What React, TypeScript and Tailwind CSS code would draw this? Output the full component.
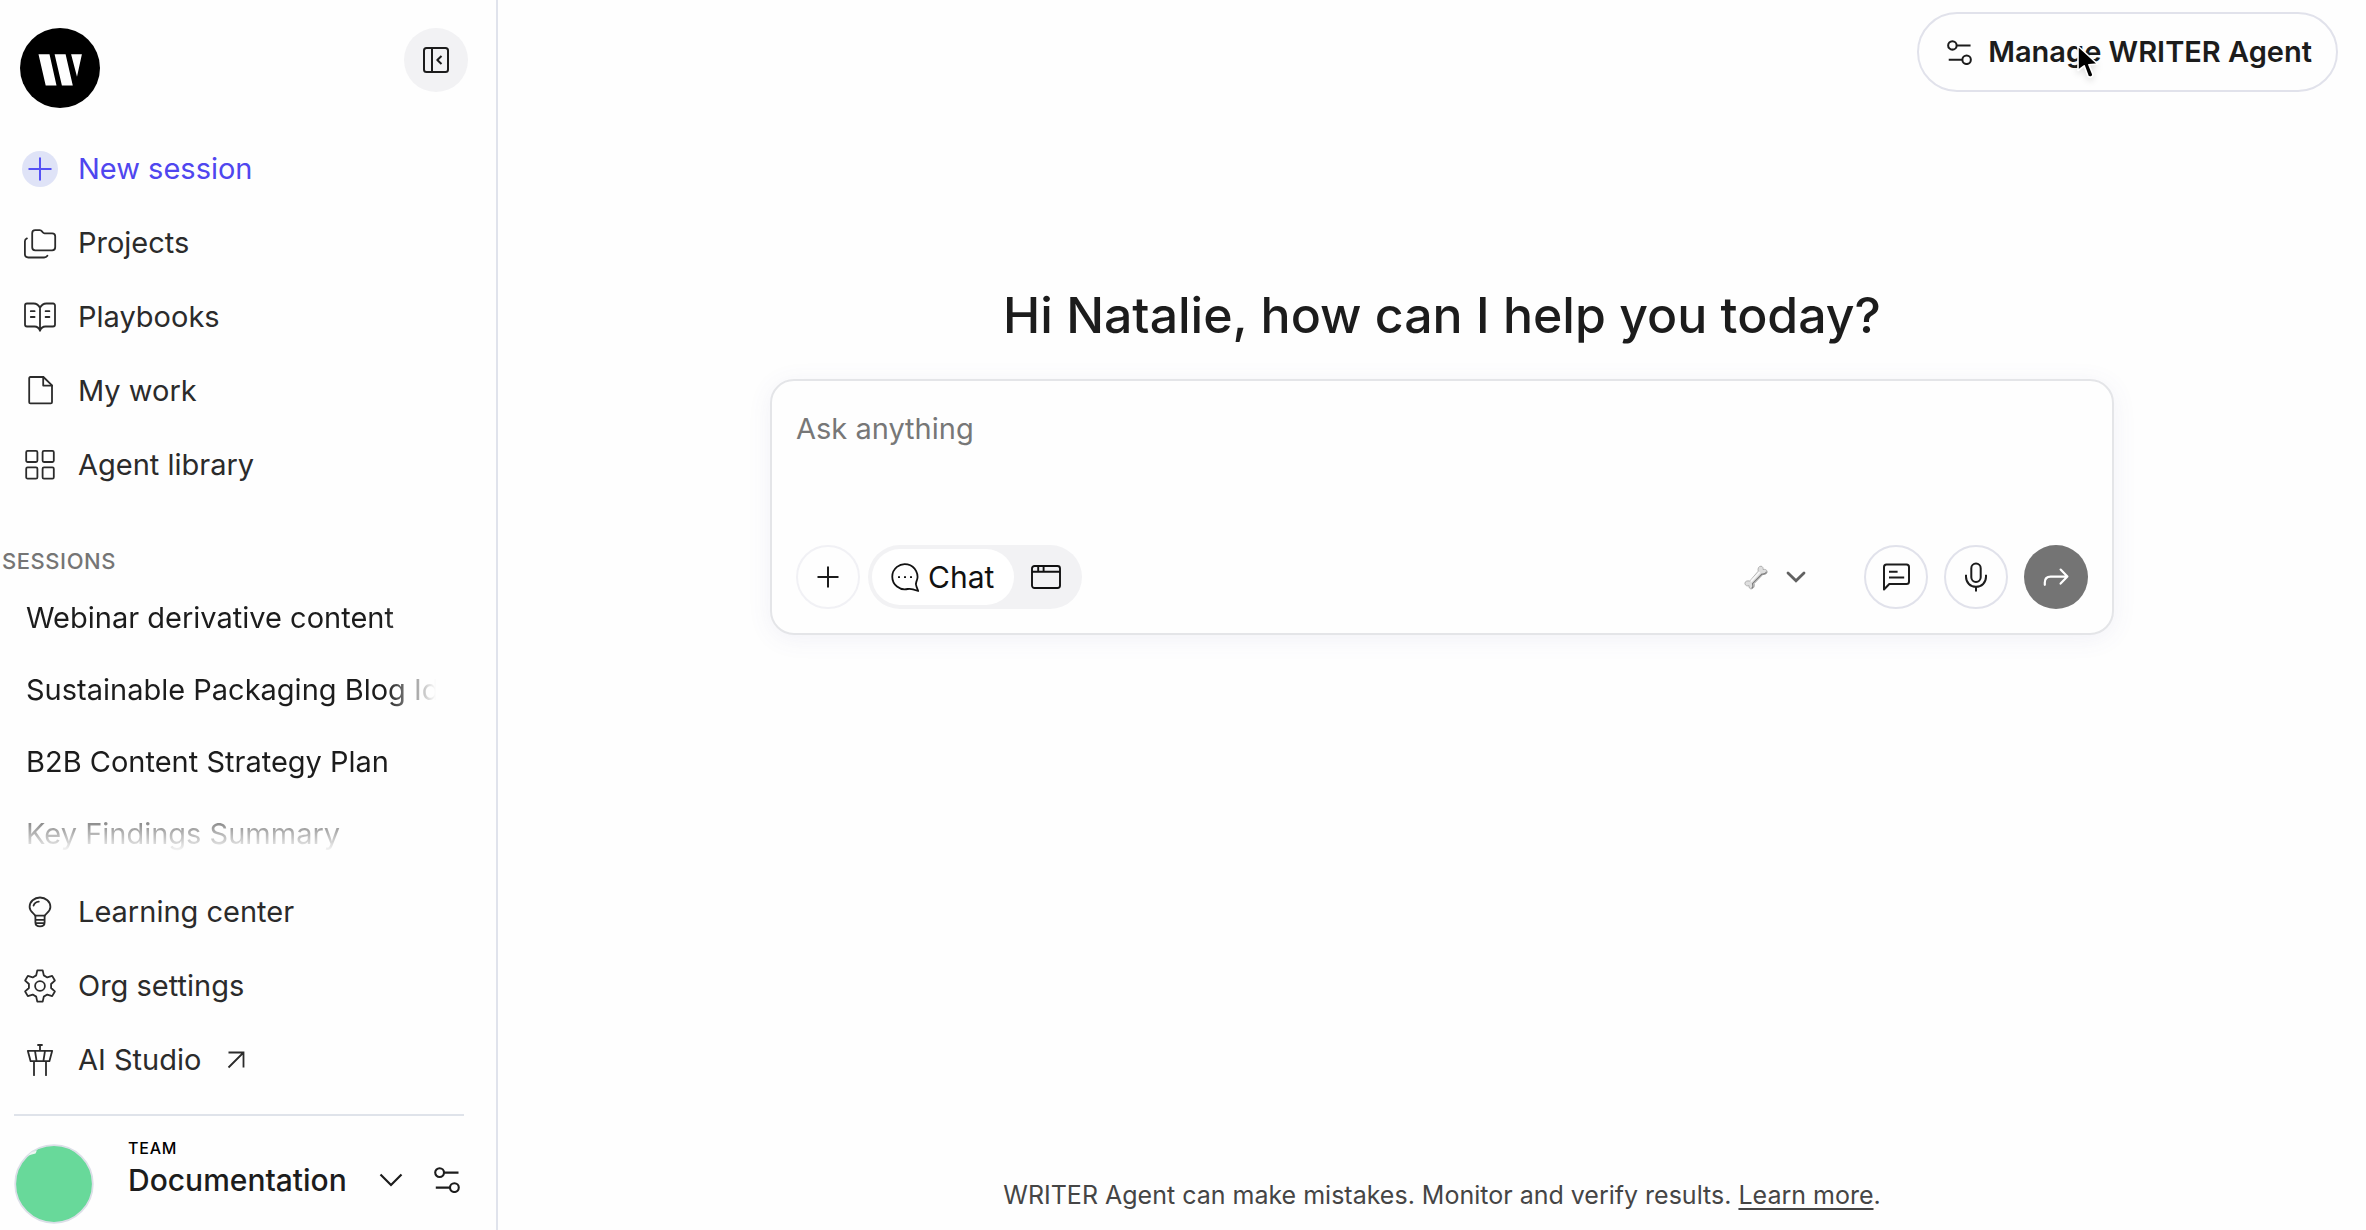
import { useState } from "react";
import type { ReactNode } from "react";

interface NavEntry {
  label: string;
  icon: ReactNode;
  external?: boolean;
}

const sessions = [
  "Webinar derivative content",
  "Sustainable Packaging Blog Ideas",
  "B2B Content Strategy Plan",
  "Key Findings Summary",
];

// one tooth of the gear, repeated six times around the centre
const gearPoints = [0, 60, 120, 180, 240, 300]
  .flatMap((deg) => {
    const a = (deg * Math.PI) / 180;
    return [[-3.8, -10.6], [-2.7, -15.6], [2.7, -15.6], [3.8, -10.6]].map(
      ([x, y]) => `${(18 + x * Math.cos(a) - y * Math.sin(a)).toFixed(2)},${(18 + x * Math.sin(a) + y * Math.cos(a)).toFixed(2)}`
    );
  })
  .join(" ");

function Glyph({ children }: { children: ReactNode }) {
  return (
    <svg viewBox="0 0 36 36" className="size-9 shrink-0" fill="none" stroke="currentColor" strokeWidth="1.8" strokeLinecap="round" strokeLinejoin="round" aria-hidden="true">
      {children}
    </svg>
  );
}

function SlidersIcon({ className }: { className: string }) {
  return (
    <svg viewBox="0 0 26 26" className={className} fill="none" stroke="currentColor" strokeWidth="2.1" aria-hidden="true">
      <circle cx="5.6" cy="5.6" r="4.4" />
      <path d="M10 5.6h14.5M1.8 20.6h14.6" />
      <circle cx="20.4" cy="20.6" r="4.4" />
    </svg>
  );
}

const mainNav: NavEntry[] = [
  {
    label: "Projects",
    icon: (
      <Glyph>
        <path d="M13.2 5.2h4.6c1 0 1.6.4 2.2 1.2l.9 1.1c.4.5.9.8 1.6.8h7.6c2 0 3.1 1.1 3.1 3v11c0 2-1.1 3-3.1 3H13.2c-2 0-3-1-3-3v-14c0-2 1-3.1 3-3.1z" />
        <path d="M4.9 13.4c-1.4.5-2 1.4-2 2.9v12.8c0 2.2 1.3 3.4 3.5 3.4h15.7c1.4 0 2.5-.5 3.3-1.7" />
      </Glyph>
    ),
  },
  {
    label: "Playbooks",
    icon: (
      <Glyph>
        <path d="M18 8.8C16.6 5.9 14.6 4.5 11.6 4.5H5c-1.2 0-2 .8-2 2v19c0 1.2.8 2 2 2h7.5c2.5 0 4.5 1.3 5.5 4.3 1-3 3-4.3 5.5-4.3H31c1.2 0 2-.8 2-2v-19c0-1.2-.8-2-2-2h-6.6c-3 0-5 1.4-6.4 4.3zM18 8.8v23" />
        <path d="M8.8 12.2h3.8M8.8 18h3.8M23.6 12.2h3.8M23.6 18h3.8" />
      </Glyph>
    ),
  },
  {
    label: "My work",
    icon: (
      <Glyph>
        <path d="M8.4 4h13l8.6 8.4v16.8c0 .8-.4 1.2-1.2 1.2H8.4c-.8 0-1.2-.4-1.2-1.2v-24c0-.8.4-1.2 1.2-1.2z" />
        <path d="M21.2 4v8.6H30" />
      </Glyph>
    ),
  },
  {
    label: "Agent library",
    icon: (
      <Glyph>
        <rect x="4.2" y="3.8" width="11.2" height="11.2" rx="1.4" />
        <rect x="20.6" y="3.8" width="11.2" height="11.2" rx="1.4" />
        <rect x="4.2" y="20.4" width="11.2" height="11.2" rx="1.4" />
        <rect x="20.6" y="20.4" width="11.2" height="11.2" rx="1.4" />
      </Glyph>
    ),
  },
];

const footerNav: NavEntry[] = [
  {
    label: "Learning center",
    icon: (
      <Glyph>
        <path d="M13.2 21.6c-1-2.2-5.6-3.9-5.6-8.7a10.4 9.4 0 0 1 20.8 0c0 4.8-4.6 6.5-5.6 8.7z" />
        <path d="M11.6 11.6c.6-2.1 2.4-3.7 5.2-4" />
        <path d="M13.4 21.6v7c0 2.2 1.8 3.8 4.6 3.8s4.6-1.6 4.6-3.8v-7M13.4 25.8h9.2M13.6 29.2h8.8" />
      </Glyph>
    ),
  },
  {
    label: "Org settings",
    icon: (
      <Glyph>
        <polygon points={gearPoints} />
        <circle cx="18" cy="18" r="4.9" />
      </Glyph>
    ),
  },
  {
    label: "AI Studio",
    external: true,
    icon: (
      <Glyph>
        <path d="M16 3h4M18 3v5.6M5.8 8.8h24.4l-2.8 10.4H8.6zM13 8.8l1.6 10.4M23 8.8l-1.6 10.4M12 19.2v14M24 19.2v14" />
      </Glyph>
    ),
  },
];

function NavItem({ entry }: { entry: NavEntry }) {
  return (
    <li>
      <a href="#" className="flex h-[74px] items-center gap-5 pl-[22px] text-[#2b2b2b]">
        {entry.icon}
        <span>{entry.label}</span>
        {entry.external && (
          <svg viewBox="0 0 18 18" className="ml-1.5 size-[18px]" fill="none" stroke="currentColor" strokeWidth="1.8" aria-hidden="true">
            <path d="M1.5 1.5h15v15M16.5 1.5l-15 15" />
          </svg>
        )}
      </a>
    </li>
  );
}

function Sidebar() {
  return (
    <aside className="flex h-screen w-[498px] shrink-0 flex-col border-r-2 border-[#e0e3ec] text-[29px] leading-9">
      <div className="flex items-start justify-between pt-7 pr-7 pl-5">
        <a href="#" aria-label="Home">
          <svg viewBox="0 0 80 80" className="size-20" aria-hidden="true">
            <circle cx="40" cy="40" r="40" fill="#000" />
            <path fill="#fff" d="M18.5 26.2h11L36.5 57.4H25.7zM34.6 26.2h11L52.8 57.4H41.9zM51.1 26.2h10.8L57 48.8z" />
          </svg>
        </a>
        <button type="button" aria-label="Collapse sidebar" className="flex size-16 items-center justify-center rounded-full bg-[#f2f2f4] text-[#1c1c1c]">
          <svg viewBox="0 0 26 26" className="size-[26px]" fill="none" stroke="currentColor" strokeWidth="2" strokeLinejoin="round">
            <rect x="1" y="1" width="24" height="24" rx="2.5" />
            <path d="M9 1v24M18.5 9l-4.2 4 4.2 4" />
          </svg>
        </button>
      </div>

      <ul className="pt-6">
        <li>
          <button type="button" className="flex h-[74px] items-center gap-5 pl-[22px] text-[#4f46ef]">
            <svg viewBox="0 0 36 36" className="size-9" stroke="#5551f5" strokeWidth="2" aria-hidden="true">
              <circle cx="18" cy="18" r="18" fill="#dfe3f7" stroke="none" />
              <path d="M18 6.5v23M6.5 18h23" />
            </svg>
            <span>New session</span>
          </button>
        </li>
        {mainNav.map((entry) => (
          <NavItem key={entry.label} entry={entry} />
        ))}
      </ul>

      <h2 className="mt-[45px] mb-[7px] pl-0.5 text-[22px] leading-7 font-medium tracking-wide text-[#757575]">SESSIONS</h2>
      <ul className="mb-[22px] min-h-0 flex-1 overflow-hidden [mask-image:linear-gradient(to_bottom,black_calc(100%-60px),transparent)]">
        {sessions.map((name) => (
          <li key={name}>
            <a href="#" className="mr-[60px] ml-[26px] flex h-[72px] items-center overflow-hidden whitespace-nowrap text-[#1c1c1c] [mask-image:linear-gradient(to_right,black_calc(100%-50px),transparent)]">
              {name}
            </a>
          </li>
        ))}
      </ul>

      <ul>
        {footerNav.map((entry) => (
          <NavItem key={entry.label} entry={entry} />
        ))}
      </ul>

      <div className="mt-[17px] mr-8 ml-[14px] border-t-2 border-[#dfe3ea]" />

      <div className="flex items-start pt-[22px] pr-9 pb-1.5 pl-[14px]">
        <svg viewBox="0 0 80 80" className="mt-1.5 size-20 shrink-0" aria-hidden="true">
          <circle cx="40" cy="40" r="38.8" fill="#68d99a" stroke="#dcdfe8" strokeWidth="1.8" />
          <path d="M14 11.5l3.5-3.3 5.5-2-1.5 3.2z" fill="#eef6f2" />
        </svg>
        <div className="ml-[34px] flex-1">
          <p className="text-base leading-5 font-medium tracking-wider text-black">TEAM</p>
          <div className="flex items-center justify-between text-[#1c1c1c]">
            <button type="button" className="flex items-center gap-8 text-[30px] leading-11 font-medium">
              Documentation
              <svg viewBox="0 0 24 14" className="h-3.5 w-6" fill="none" stroke="currentColor" strokeWidth="2.2">
                <path d="M1.5 1.5L12 12 22.5 1.5" />
              </svg>
            </button>
            <button type="button" aria-label="Team settings">
              <SlidersIcon className="size-[26px]" />
            </button>
          </div>
        </div>
      </div>
    </aside>
  );
}

function Composer() {
  const [prompt, setPrompt] = useState("");
  const round = "flex size-16 items-center justify-center rounded-full border-2";

  return (
    <form className="flex w-full max-w-[1344px] flex-col rounded-3xl border-2 border-[#e4e5e8] bg-[#fefefe] p-6 shadow-[0_4px_24px_rgba(90,90,160,0.08)]">
      <textarea
        aria-label="Message"
        placeholder="Ask anything"
        value={prompt}
        onChange={(e) => setPrompt(e.target.value)}
        className="h-[140px] w-full resize-none bg-transparent pt-1.5 text-[29px] leading-9 outline-none placeholder:text-[#777777]"
      />
      <div className="flex items-center">
        <button type="button" aria-label="Add attachment" className={`${round} border-[#f1f1f5] text-[#1c1c1c]`}>
          <svg viewBox="0 0 22 22" className="size-[22px]" stroke="currentColor" strokeWidth="2">
            <path d="M11 0.5v21M0.5 11h21" />
          </svg>
        </button>
        <div className="ml-2 flex h-16 items-center rounded-full bg-[#f2f2f4] p-1 text-[30px] text-[#111111]">
          <button type="button" className="flex h-14 items-center gap-2 rounded-full bg-white pr-5 pl-[18px]">
            <svg viewBox="0 0 30 30" className="size-[30px]" fill="none" stroke="currentColor" strokeWidth="1.8" strokeLinejoin="round">
              <path d="M17.600 27A12.600 12.600 0 1 1 26.300 20c-.8 1.700-.6 2.800.2 4.600l1.700 4.400-5.200-1.600c-1.900-.6-3.500-.7-5.400-.4z" />
              <path d="M8 15.2h2M14 15.2h2M20 15.2h2" />
            </svg>
            Chat
          </button>
          <button type="button" aria-label="Canvas" className="flex h-14 items-center px-[17px]">
            <svg viewBox="0 0 30 24" className="h-6 w-[30px]" fill="none" stroke="currentColor" strokeWidth="1.9">
              <rect x="1" y="1" width="28" height="22" rx="2.5" />
              <path d="M1 6.8h28M7.2 1v5.8M12.6 1v5.8" />
            </svg>
          </button>
        </div>

        <button type="button" aria-label="Choose model" className="ml-auto flex items-center gap-[18px] text-[#616161]">
          <svg viewBox="0 0 24 25" className="h-[25px] w-6" strokeLinejoin="round" aria-hidden="true">
            <path
              fill="#dedede"
              stroke="#a3a3a3"
              strokeWidth="0.8"
              d="M14.2 6.2C13.4 3.3 15 1 17 1.2c1.6.1 2.4 1.6 2 3.3 2-.5 3.9.3 4.2 2 .3 2.2-2.2 3.400-4.200 2.900L10.200 18.600c1 2.300-.6 5.100-2.800 5.300-1.900.1-2.600-1.500-2.300-3.200-1.900.7-4-.2-4.200-2.100-.2-2.200 2.300-3.300 4.900-2.500z"
            />
            <path d="M7.5 23.2c1.3-.5 1.7-2.4 1-4.5L18 9c2 .4 4.4-.7 4.3-2.4" fill="none" stroke="#7c7c7c" strokeWidth="1.2" />
            <path d="M7 16.4L15.6 7" stroke="#f8f8f8" strokeWidth="1.8" />
          </svg>
          <svg viewBox="0 0 20 12" className="h-3 w-5" fill="none" stroke="currentColor" strokeWidth="2.8" strokeLinecap="round">
            <path d="M2 2l8 7.8L18 2" />
          </svg>
        </button>

        <div className="ml-[58px] flex gap-4 text-[#1c1c1c]">
          <button type="button" aria-label="Prompt library" className={`${round} border-[#e1e2eb]`}>
            <svg viewBox="0 0 28 28" className="size-7" fill="none" stroke="currentColor" strokeWidth="2" strokeLinejoin="round">
              <path d="M2 26.5V4c0-1.6.9-2.5 2.5-2.5h20c1.6 0 2.5.9 2.5 2.5v14.5c0 1.6-.9 2.5-2.5 2.5H7.3z" />
              <path d="M7 8.8h8.6M7 14.6h15.2" />
            </svg>
          </button>
          <button type="button" aria-label="Dictate" className={`${round} border-[#e1e2eb]`}>
            <svg viewBox="0 0 22 30" className="h-[30px] w-[22px]" fill="none" stroke="currentColor" strokeWidth="2">
              <rect x="6.3" y="1.5" width="9.4" height="18.5" rx="4.7" />
              <path d="M1 12.8v2c0 5.7 4.3 10 10 10s10-4.3 10-10v-2M11 24.8v4.7" />
            </svg>
          </button>
          <button type="submit" aria-label="Send" className="flex size-16 items-center justify-center rounded-full bg-[#747474] text-white">
            <svg viewBox="0 0 26 18" className="h-[18px] w-[26px]" fill="none" stroke="currentColor" strokeWidth="2.2" strokeLinecap="round" strokeLinejoin="round">
              <path d="M1.8 16.8v-2.4c0-4 2-5.8 5.8-5.8h16.6M17.6 1.6l6.8 7-6.8 7" />
            </svg>
          </button>
        </div>
      </div>
    </form>
  );
}

export default function App() {
  return (
    <div className="flex min-h-screen bg-[#fefefe] font-['Inter','Liberation_Sans',sans-serif] text-[#1c1c1c]">
      <Sidebar />
      <div className="flex min-w-0 flex-1 flex-col">
        <header className="flex justify-end pt-3 pr-7">
          <button type="button" className="relative flex h-20 items-center gap-4 rounded-full border-2 border-[#e1e2eb] pr-6 pl-7 text-[29px] font-semibold">
            <SlidersIcon className="size-[25px]" />
            Manage WRITER Agent
            {/* mouse pointer resting on the button */}
            <svg viewBox="0 0 24 38" className="absolute top-[30px] left-[157px] h-[38px] w-6 drop-shadow-md" aria-hidden="true">
              <path d="M2 2v24.5l6.2-4.7 3.6 9.7c.6 1.5 1.9 2 3.4 1.4s2-1.9 1.400-3.300L12.900 20.700l8.700-.7z" fill="#000" stroke="#fff" strokeWidth="1.6" strokeLinejoin="round" />
            </svg>
          </button>
        </header>

        <main className="flex flex-1 flex-col items-center pt-[192px] pr-10 pl-[60px]">
          <h1 className="text-[50px] leading-[63px] font-medium">Hi Natalie, how can I help you today?</h1>
          <div className="mt-8 flex w-full justify-center">
            <Composer />
          </div>
        </main>

        <footer className="pr-10 pb-[17px] pl-[60px] text-center text-[25px] leading-9 text-[#454545]">
          WRITER Agent can make mistakes. Monitor and verify results.{" "}
          <a href="#" className="underline underline-offset-4">Learn more</a>.
        </footer>
      </div>
    </div>
  );
}
